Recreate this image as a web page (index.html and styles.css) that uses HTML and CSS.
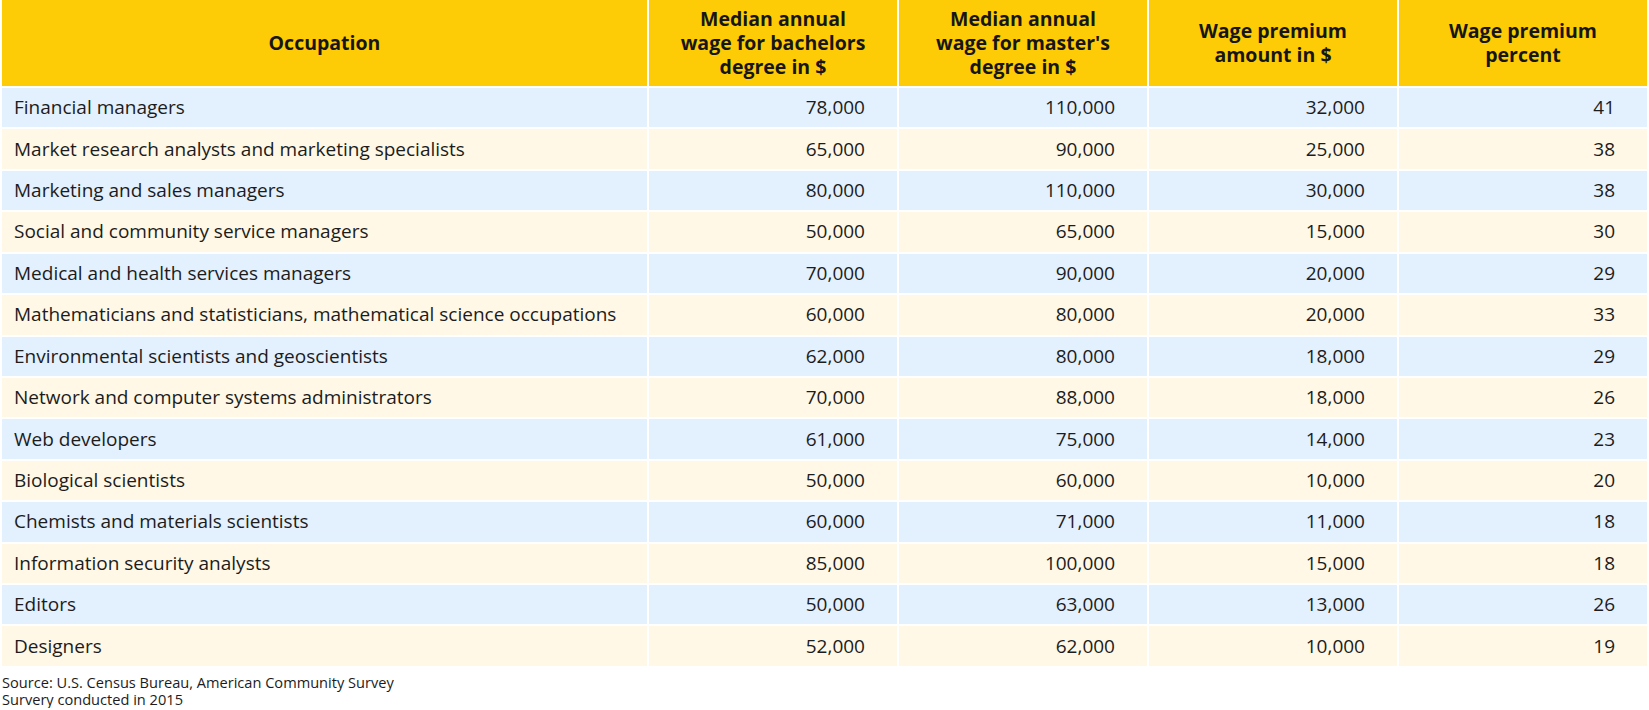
FILE: index.html
```html
<!DOCTYPE html>
<html lang="en">
<head>
<meta charset="utf-8">
<title>Wage premium by occupation</title>
<link rel="stylesheet" href="styles.css">
</head>
<body>
<table class="wage-table">
  <colgroup>
    <col class="col-occ">
    <col class="col-num">
    <col class="col-num">
    <col class="col-num">
    <col class="col-num">
  </colgroup>
  <thead>
    <tr>
      <th>Occupation</th>
      <th>Median annual<br>wage for bachelors<br>degree in $</th>
      <th>Median annual<br>wage for master's<br>degree in $</th>
      <th>Wage premium<br>amount in $</th>
      <th>Wage premium<br>percent</th>
    </tr>
  </thead>
  <tbody>
    <tr class="blue"><td>Financial managers</td><td class="num">78,000</td><td class="num">110,000</td><td class="num">32,000</td><td class="num">41</td></tr>
    <tr class="cream"><td>Market research analysts and marketing specialists</td><td class="num">65,000</td><td class="num">90,000</td><td class="num">25,000</td><td class="num">38</td></tr>
    <tr class="blue"><td>Marketing and sales managers</td><td class="num">80,000</td><td class="num">110,000</td><td class="num">30,000</td><td class="num">38</td></tr>
    <tr class="cream"><td>Social and community service managers</td><td class="num">50,000</td><td class="num">65,000</td><td class="num">15,000</td><td class="num">30</td></tr>
    <tr class="blue"><td>Medical and health services managers</td><td class="num">70,000</td><td class="num">90,000</td><td class="num">20,000</td><td class="num">29</td></tr>
    <tr class="cream"><td>Mathematicians and statisticians, mathematical science occupations</td><td class="num">60,000</td><td class="num">80,000</td><td class="num">20,000</td><td class="num">33</td></tr>
    <tr class="blue"><td>Environmental scientists and geoscientists</td><td class="num">62,000</td><td class="num">80,000</td><td class="num">18,000</td><td class="num">29</td></tr>
    <tr class="cream"><td>Network and computer systems administrators</td><td class="num">70,000</td><td class="num">88,000</td><td class="num">18,000</td><td class="num">26</td></tr>
    <tr class="blue"><td>Web developers</td><td class="num">61,000</td><td class="num">75,000</td><td class="num">14,000</td><td class="num">23</td></tr>
    <tr class="cream"><td>Biological scientists</td><td class="num">50,000</td><td class="num">60,000</td><td class="num">10,000</td><td class="num">20</td></tr>
    <tr class="blue"><td>Chemists and materials scientists</td><td class="num">60,000</td><td class="num">71,000</td><td class="num">11,000</td><td class="num">18</td></tr>
    <tr class="cream"><td>Information security analysts</td><td class="num">85,000</td><td class="num">100,000</td><td class="num">15,000</td><td class="num">18</td></tr>
    <tr class="blue"><td>Editors</td><td class="num">50,000</td><td class="num">63,000</td><td class="num">13,000</td><td class="num">26</td></tr>
    <tr class="cream"><td>Designers</td><td class="num">52,000</td><td class="num">62,000</td><td class="num">10,000</td><td class="num">19</td></tr>
  </tbody>
</table>
<p class="source">Source: U.S. Census Bureau, American Community Survey<br>Survery conducted in 2015</p>
</body>
</html>
```
FILE: styles.css
```css
html, body {
  margin: 0;
  padding: 0;
  background: #ffffff;
}

body {
  font-family: "Open Sans", Lato, "Noto Sans", "Liberation Sans", sans-serif;
  color: #1c1c1c;
  font-variant-ligatures: none;
}

.wage-table {
  width: 1649px;
  margin-top: -2px;
  border-collapse: separate;
  border-spacing: 2px;
  table-layout: fixed;
}

.col-occ { width: 645px; }
.col-num { width: 248px; }

.wage-table th {
  background: #fecc06;
  height: 86px;
  padding: 0 8px;
  box-sizing: border-box;
  font-size: 19.5px;
  font-weight: 700;
  line-height: 24px;
  text-align: center;
  vertical-align: middle;
  color: #161616;
}

.wage-table td {
  height: 39.43px;
  padding: 0 12px 1px;
  box-sizing: border-box;
  font-size: 19px;
  line-height: 22px;
  vertical-align: middle;
  white-space: nowrap;
}

.wage-table td.num {
  text-align: right;
  padding-right: 32px;
}

.blue td { background: #e3f0fd; }
.cream td { background: #fff8e6; }

.source {
  margin: 6px 0 0 2px;
  font-size: 14.6px;
  line-height: 17px;
  color: #1c1c1c;
}
```
